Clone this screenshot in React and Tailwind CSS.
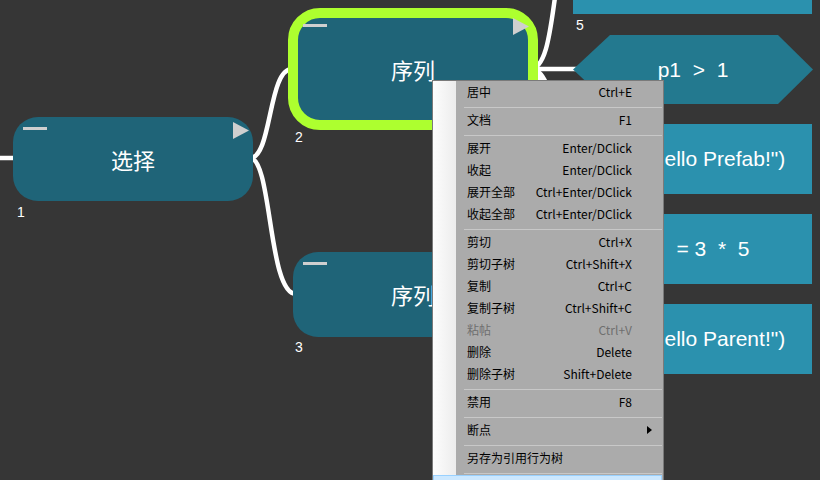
import React from 'react';

const menuItems = [
  { label: '居中', key: 'Ctrl+E' },
  { sep: true },
  { label: '文档', key: 'F1' },
  { sep: true },
  { label: '展开', key: 'Enter/DClick' },
  { label: '收起', key: 'Enter/DClick' },
  { label: '展开全部', key: 'Ctrl+Enter/DClick' },
  { label: '收起全部', key: 'Ctrl+Enter/DClick' },
  { sep: true },
  { label: '剪切', key: 'Ctrl+X' },
  { label: '剪切子树', key: 'Ctrl+Shift+X' },
  { label: '复制', key: 'Ctrl+C' },
  { label: '复制子树', key: 'Ctrl+Shift+C' },
  { label: '粘帖', key: 'Ctrl+V', disabled: true },
  { label: '删除', key: 'Delete' },
  { label: '删除子树', key: 'Shift+Delete' },
  { sep: true },
  { label: '禁用', key: 'F8' },
  { sep: true },
  { label: '断点', sub: true },
  { sep: true },
  { label: '另存为引用行为树' },
  { sep: true },
];

const actions = ['Log("Hello Prefab!")', 'p2   = 3  *  5', 'Log("Hello Parent!")'];

const latin = "font-['Liberation_Sans',Arial,sans-serif]";

const Collapse = () => <div className="absolute left-[10px] top-[10px] w-[24px] h-[3px] bg-[#cfcfcf]" />;

const Expand = ({ className }) => (
  <svg className={`absolute ${className}`} width="16" height="17" viewBox="0 0 16 17">
    <polygon points="0,0 16,8.5 0,17" fill="#cfcfcf" />
  </svg>
);

const NodeLabel = ({ n, className }) => (
  <span className={`absolute text-[14px] leading-none text-white ${latin} ${className}`}>{n}</span>
);

export default function App() {
  return (
    <div className="relative w-[820px] h-[480px] overflow-hidden bg-[#363636] font-['Noto_Sans_CJK_SC',sans-serif]">
      {/* edges */}
      <svg className="absolute inset-0" width="820" height="480">
        <g fill="none" stroke="#ffffff" strokeWidth="4.5">
          <path d="M0 158 L16 158" />
          <path d="M250 158 C272 158 268 69 292 69" />
          <path d="M250 158 C272 158 268 294 296 294" />
          <path d="M530 69 L580 69" />
          <path d="M530 69 C560 69 548 -60 578 -60" />
          <path d="M530 69 C560 69 548 159 578 159" />
          <path d="M530 69 C560 69 548 249 578 249" />
          <path d="M530 69 C560 69 548 339 578 339" />
        </g>
      </svg>

      {/* node 1 */}
      <div className="absolute left-[13px] top-[117px] w-[240px] h-[84px] rounded-[25px] bg-[#1f6478] flex items-center justify-center">
        <Collapse />
        <Expand className="right-[4px] top-[5px]" />
        <span className="text-[22px] text-white">选择</span>
      </div>
      <NodeLabel n="1" className="left-[17px] top-[205px]" />

      {/* node 2 (selected) */}
      <div className="absolute left-[288px] top-[8px] w-[250px] h-[122px] rounded-[32px] border-[10px] border-[#adff2f] bg-[#1f6478] flex items-center justify-center">
        <div className="absolute left-[5px] top-[6px] w-[24px] h-[3px] bg-[#cfcfcf]" />
        <Expand className="right-[-1px] top-[0px]" />
        <span className="text-[22px] text-white">序列</span>
      </div>
      <NodeLabel n="2" className="left-[295px] top-[130px]" />

      {/* node 3 */}
      <div className="absolute left-[293px] top-[252px] w-[240px] h-[85px] rounded-[25px] bg-[#1f6478] flex items-center justify-center">
        <Collapse />
        <span className="text-[22px] text-white">序列</span>
      </div>
      <NodeLabel n="3" className="left-[295px] top-[340px]" />

      {/* right column of children */}
      <div className={`absolute left-[573px] top-[-56px] w-[240px] flex flex-col gap-[20px] text-[21px] text-white whitespace-pre ${latin}`}>
        <div className="relative w-[239px] h-[70px] bg-[#2b91ae]">
          <span className="absolute left-[3px] top-[74px] text-[14px] leading-none">5</span>
        </div>
        <div className="relative mt-[1px] h-[69px] flex items-center justify-center">
          <svg className="absolute inset-0" width="240" height="69" viewBox="0 0 240 69">
            <polygon points="0,34.5 37,0 205,0 240,34.5 205,69 37,69" fill="#23798f" />
          </svg>
          <span className="relative">p1  &gt;  1</span>
        </div>
        {actions.map((t, i) => (
          <div key={i} className="w-[239px] h-[70px] bg-[#2b91ae] flex items-center justify-center">
            {t}
          </div>
        ))}
      </div>

      {/* context menu */}
      <div className="absolute left-[432px] top-[80px] w-[232px] h-[420px] border border-[#7a7a7a] bg-[#ababab] text-[12px] text-black">
        <div className="absolute left-0 top-0 bottom-0 w-[23px] bg-gradient-to-r from-[#fdfdfd] to-[#ececec]" />
        <div className="relative">
          {menuItems.map((it, i) =>
            it.sep ? (
              <div key={i} className="h-[6px] pl-[31px] pr-[1px] pt-[4px]">
                <div className="h-px bg-[#c8c8c8]" />
              </div>
            ) : (
              <div
                key={i}
                className={`h-[22px] flex items-center justify-between pl-[34px] pr-[31px] ${it.disabled ? 'text-[#6f6f6f]' : ''}`}
              >
                <span>{it.label}</span>
                {it.key && <span>{it.key}</span>}
                {it.sub && (
                  <svg className="mr-[-20px]" width="5" height="8" viewBox="0 0 5 8">
                    <polygon points="0,0 5,4 0,8" fill="#000" />
                  </svg>
                )}
              </div>
            )
          )}
          <div className="mr-[1px] h-[20px] bg-[#cce8ff] border border-[#99d1ff]" />
        </div>
      </div>
    </div>
  );
}
